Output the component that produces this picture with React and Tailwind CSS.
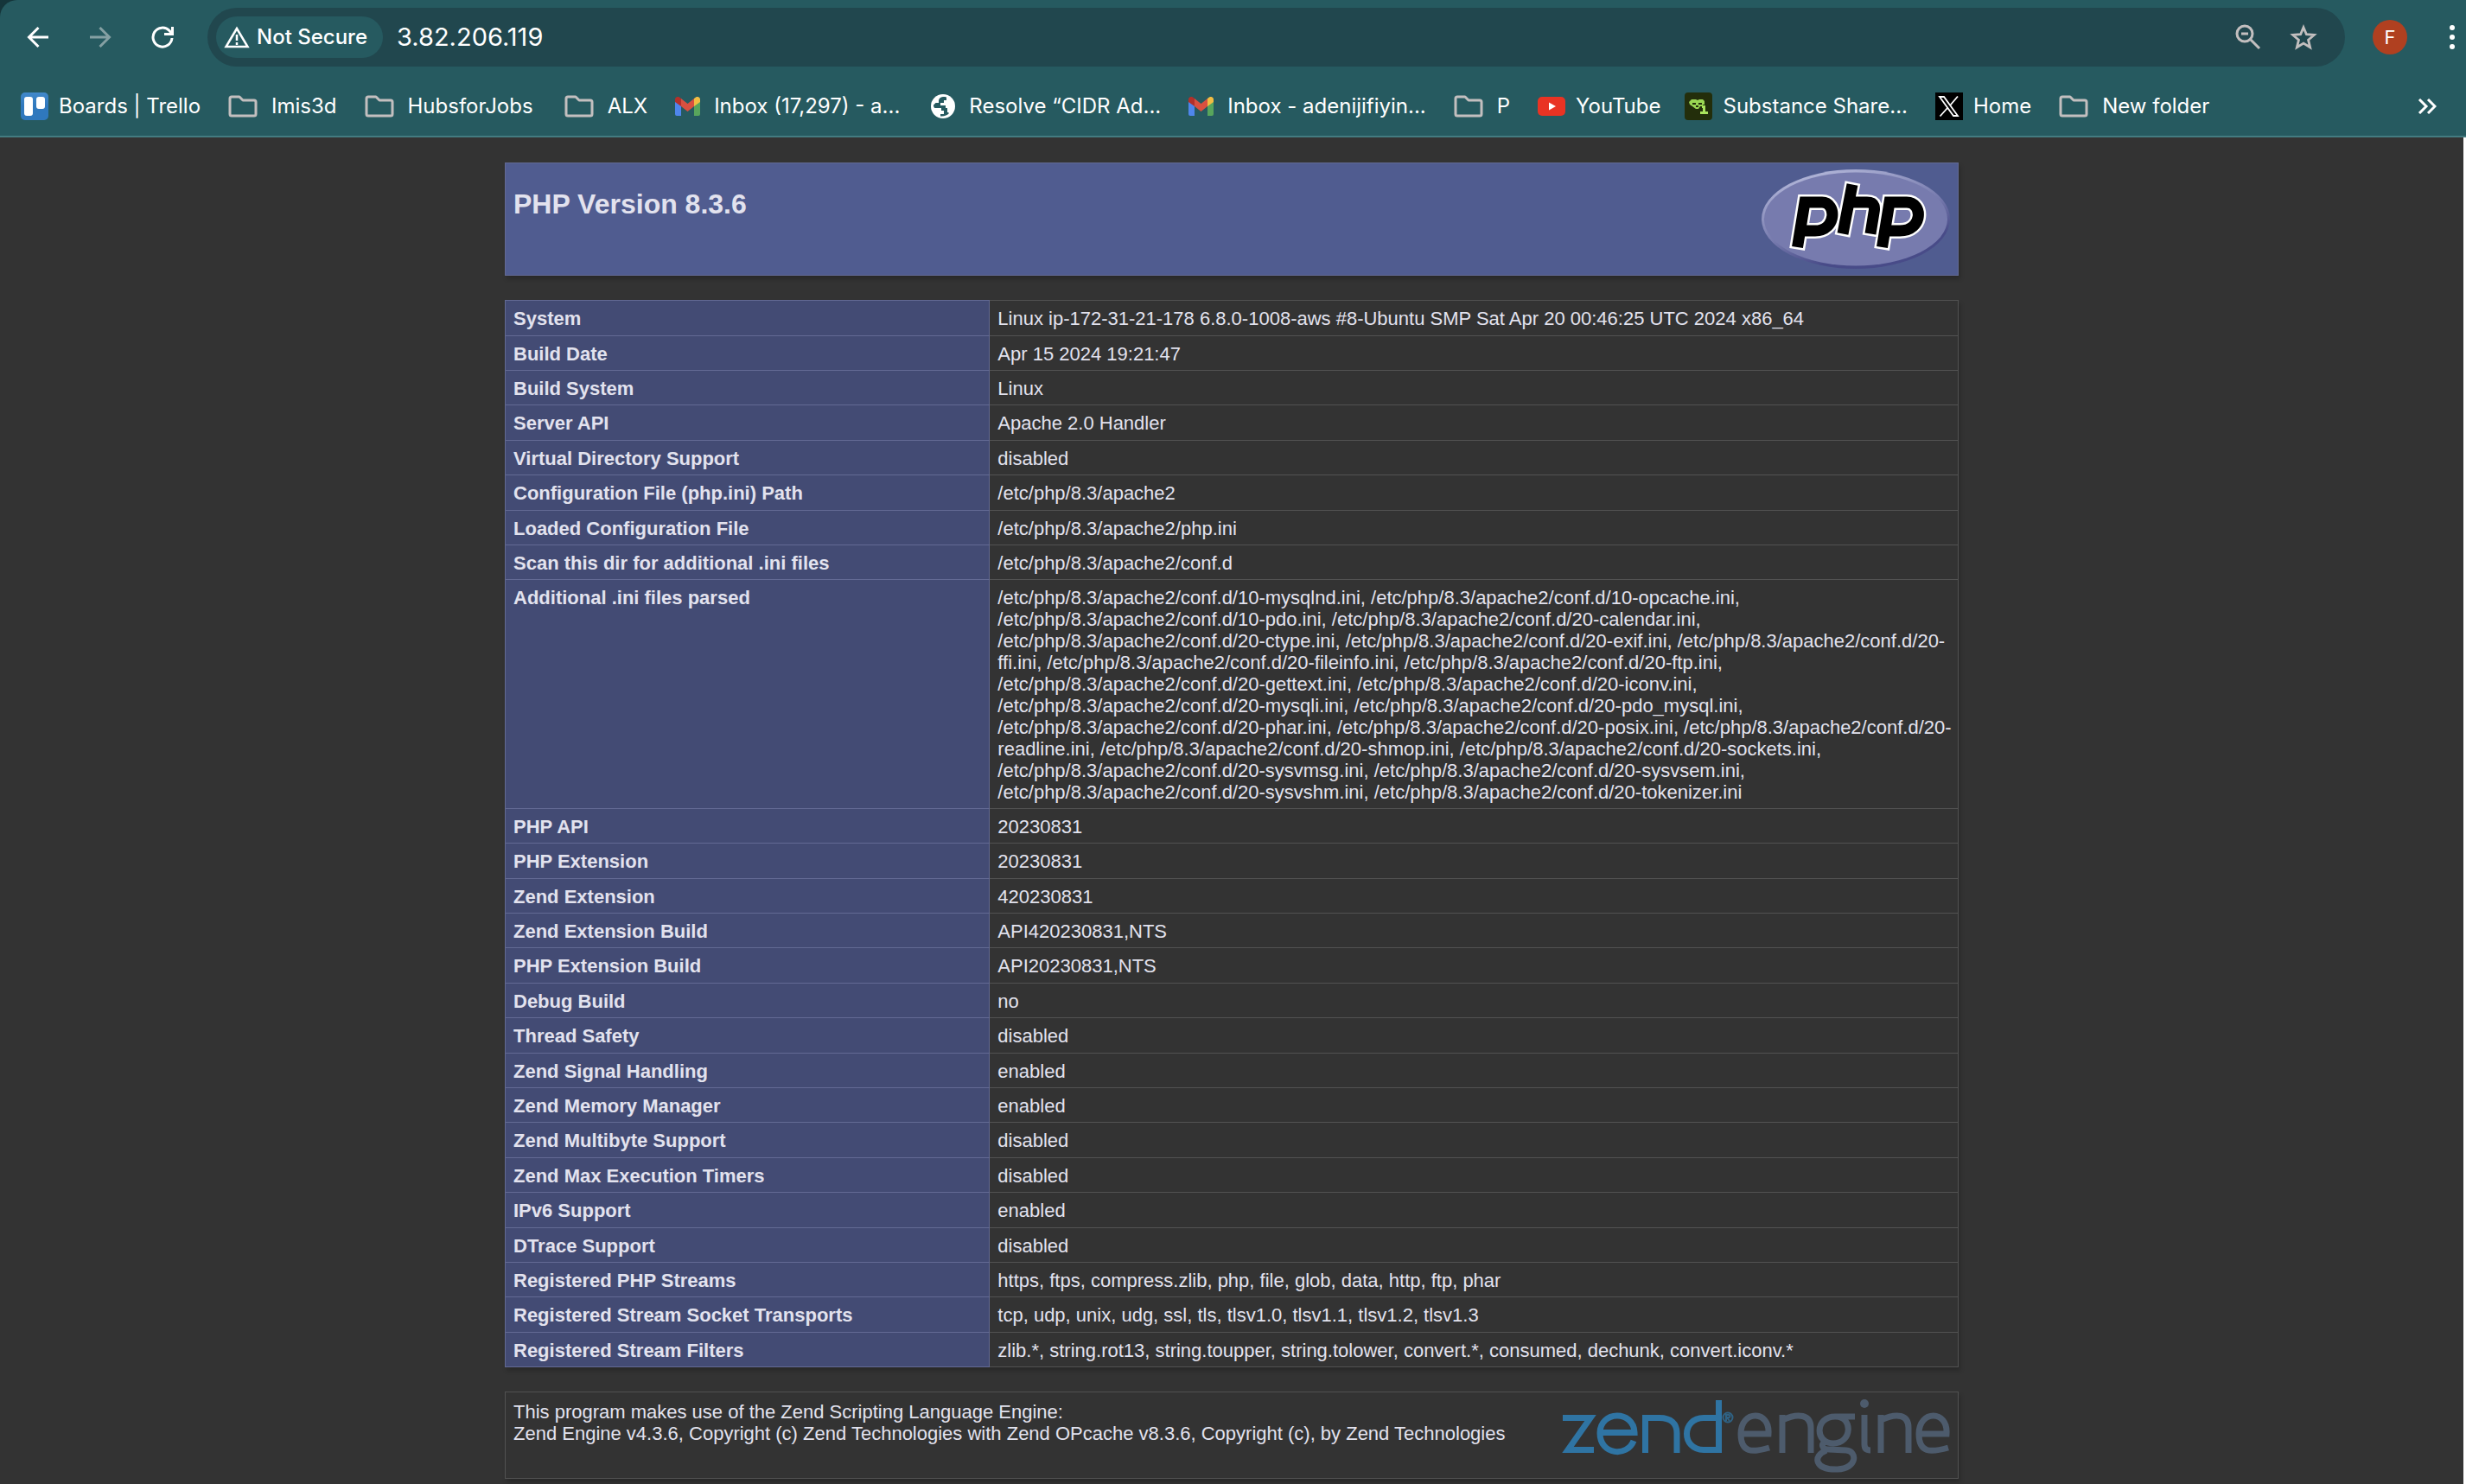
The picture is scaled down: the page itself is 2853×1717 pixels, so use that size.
const rows = [
  ["System", "Linux ip-172-31-21-178 6.8.0-1008-aws #8-Ubuntu SMP Sat Apr 20 00:46:25 UTC 2024 x86_64"],
  ["Build Date", "Apr 15 2024 19:21:47"],
  ["Build System", "Linux"],
  ["Server API", "Apache 2.0 Handler"],
  ["Virtual Directory Support", "disabled"],
  ["Configuration File (php.ini) Path", "/etc/php/8.3/apache2"],
  ["Loaded Configuration File", "/etc/php/8.3/apache2/php.ini"],
  ["Scan this dir for additional .ini files", "/etc/php/8.3/apache2/conf.d"],
  [
    "Additional .ini files parsed",
    "/etc/php/8.3/apache2/conf.d/10-mysqlnd.ini, /etc/php/8.3/apache2/conf.d/10-opcache.ini, /etc/php/8.3/apache2/conf.d/10-pdo.ini, /etc/php/8.3/apache2/conf.d/20-calendar.ini, /etc/php/8.3/apache2/conf.d/20-ctype.ini, /etc/php/8.3/apache2/conf.d/20-exif.ini, /etc/php/8.3/apache2/conf.d/20-ffi.ini, /etc/php/8.3/apache2/conf.d/20-fileinfo.ini, /etc/php/8.3/apache2/conf.d/20-ftp.ini, /etc/php/8.3/apache2/conf.d/20-gettext.ini, /etc/php/8.3/apache2/conf.d/20-iconv.ini, /etc/php/8.3/apache2/conf.d/20-mysqli.ini, /etc/php/8.3/apache2/conf.d/20-pdo_mysql.ini, /etc/php/8.3/apache2/conf.d/20-phar.ini, /etc/php/8.3/apache2/conf.d/20-posix.ini, /etc/php/8.3/apache2/conf.d/20-readline.ini, /etc/php/8.3/apache2/conf.d/20-shmop.ini, /etc/php/8.3/apache2/conf.d/20-sockets.ini, /etc/php/8.3/apache2/conf.d/20-sysvmsg.ini, /etc/php/8.3/apache2/conf.d/20-sysvsem.ini, /etc/php/8.3/apache2/conf.d/20-sysvshm.ini, /etc/php/8.3/apache2/conf.d/20-tokenizer.ini",
  ],
  ["PHP API", "20230831"],
  ["PHP Extension", "20230831"],
  ["Zend Extension", "420230831"],
  ["Zend Extension Build", "API420230831,NTS"],
  ["PHP Extension Build", "API20230831,NTS"],
  ["Debug Build", "no"],
  ["Thread Safety", "disabled"],
  ["Zend Signal Handling", "enabled"],
  ["Zend Memory Manager", "enabled"],
  ["Zend Multibyte Support", "disabled"],
  ["Zend Max Execution Timers", "disabled"],
  ["IPv6 Support", "enabled"],
  ["DTrace Support", "disabled"],
  ["Registered PHP Streams", "https, ftps, compress.zlib, php, file, glob, data, http, ftp, phar"],
  ["Registered Stream Socket Transports", "tcp, udp, unix, udg, ssl, tls, tlsv1.0, tlsv1.1, tlsv1.2, tlsv1.3"],
  ["Registered Stream Filters", "zlib.*, string.rot13, string.toupper, string.tolower, convert.*, consumed, dechunk, convert.iconv.*"],
];

const FolderIcon = () => (
  <svg viewBox="0 0 34 26" className="h-[26px] w-[34px]" fill="none" stroke="#c3bfbf" strokeWidth="3" strokeLinejoin="round">
    <path d="M2 4a2 2 0 0 1 2-2h9l4 4h13a2 2 0 0 1 2 2v14a2 2 0 0 1-2 2H4a2 2 0 0 1-2-2z" />
  </svg>
);

const TrelloIcon = () => (
  <svg viewBox="0 0 32 32" className="size-8">
    <defs>
      <linearGradient id="trello" x1="0" y1="0" x2="0" y2="1">
        <stop offset="0" stopColor="#4289cb" />
        <stop offset="0.500" stopColor="#2f78bd" />
      </linearGradient>
    </defs>
    <rect width="32" height="32" rx="5" fill="url(#trello)" />
    <rect x="4" y="5" width="10" height="22" rx="3" fill="#fff" />
    <rect x="18" y="5" width="10" height="14" rx="3" fill="#fff" />
  </svg>
);

const GmailIcon = () => (
  <svg viewBox="0 0 29 22" className="h-[22px] w-[29px]">
    <path d="M0 5h7v17H2a2 2 0 0 1-2-2z" fill="#4f86ec" />
    <path d="M22 5h7v15a2 2 0 0 1-2 2h-5z" fill="#58a55c" />
    <path d="M22 2l2-1.500c2-1.500 5 0 5 2.500v3l-7 5z" fill="#f2bd42" />
    <path d="M7 2L5 .5C3-1 0 .5 0 3v3l7 5z" fill="#b3302a" />
    <path d="M7 2l7.500 6L22 2v9l-7.500 6L7 11z" fill="#d95040" />
  </svg>
);

const GlobeIcon = () => (
  <svg viewBox="0 0 28 28" className="size-7">
    <circle cx="14" cy="14" r="14" fill="#fff" />
    <path d="M14 3c-3 .4-5 2-5 4.500V10H5.500L3 12.500c0 2 .5 3 1.500 3.500H12v3h3v4h-4v2.500c4 .5 8-1 10-3.500l-1-1h-1v-5h-2v-3h-6v-3h4V7h3V3.500C17 3 15.500 3 14 3z" fill="#265a60" />
  </svg>
);

const YouTubeIcon = () => (
  <svg viewBox="0 0 32 22" className="h-[22px] w-8">
    <rect width="32" height="22" rx="5" fill="#e93323" />
    <path d="M13 6.500v9l8-4.500z" fill="#fff" />
  </svg>
);

const SubstanceIcon = () => (
  <svg viewBox="0 0 32 32" className="size-8">
    <rect width="32" height="32" rx="4" fill="#232e0b" />
    <path d="M8 8h5l2 1 2-1h4l2 2v4h-2v2h-3l-2 3h-3l-4-3-3-2-1-3z" fill="#9ad653" />
    <path d="M9 12h4v2H9zM16 12h4v2h-4zM13 15h3v2h-3z" fill="#232e0b" />
    <path d="M20 15h4v7h3v3h-9v-3h3v-4h-1z" fill="#a9e35c" />
  </svg>
);

const XIcon = () => (
  <svg viewBox="0 0 32 32" className="size-8">
    <rect width="32" height="32" fill="#000" />
    <path d="M5 5h5l16 22h-5zM26 4.500L17.500 14.500M14 18L5.500 27.500" fill="none" stroke="#fff" strokeWidth="1.800" />
  </svg>
);

const bookmarks = [
  [TrelloIcon, "Boards | Trello", "ml-6 gap-3"],
  [FolderIcon, "Imis3d", "ml-8 gap-4"],
  [FolderIcon, "HubsforJobs", "ml-8 gap-4"],
  [FolderIcon, "ALX", "ml-9 gap-4"],
  [GmailIcon, "Inbox (17,297) - a...", "ml-8 gap-4"],
  [GlobeIcon, "Resolve “CIDR Ad...", "ml-9 gap-4"],
  [GmailIcon, "Inbox - adenijifiyin...", "ml-8 gap-4"],
  [FolderIcon, "P", "ml-8 gap-4"],
  [YouTubeIcon, "YouTube", "ml-8 gap-3"],
  [SubstanceIcon, "Substance Share...", "ml-7 gap-3"],
  [XIcon, "Home", "ml-8 gap-3"],
  [FolderIcon, "New folder", "ml-8 gap-4"],
];

const iconButton = "flex size-8 shrink-0 items-center justify-center";

function Toolbar() {
  return (
    <div className="flex h-[86px] items-center">
      <button aria-label="Back" className={iconButton + " ml-7"}>
        <svg viewBox="0 0 26 26" className="size-[26px]" fill="none" stroke="#fff" strokeWidth="3">
          <path d="M25 13H3M13.500 2L2.500 13l11 11" />
        </svg>
      </button>
      <button aria-label="Forward" className={iconButton + " ml-10"}>
        <svg viewBox="0 0 26 26" className="size-[26px]" fill="none" stroke="#85a0a3" strokeWidth="3">
          <path d="M1 13h22M12.500 2l11 11-11 11" />
        </svg>
      </button>
      <button aria-label="Reload" className={iconButton + " ml-10"}>
        <svg viewBox="0 0 26 26" className="size-[26px]" fill="none" stroke="#fff" strokeWidth="3">
          <path d="M24 14A11 11 0 1 1 21 5.500L23 8M24.500 1v8.500H15" />
        </svg>
      </button>
      <div className="ml-9 flex h-[68px] flex-1 items-center rounded-full bg-[#21474e] pr-8 pl-[10px]">
        <button className="flex h-12 shrink-0 items-center gap-2 rounded-full bg-[#265a60] pr-[18px] pl-[9px] text-[24px] font-medium">
          <svg viewBox="0 0 30 26" className="h-[26px] w-[30px]" fill="none" stroke="#fff" strokeWidth="2.500">
            <path d="M15 3L2.500 24h25zM15 10v7M15 19v3" />
          </svg>
          Not Secure
        </button>
        <input aria-label="Address" defaultValue="3.82.206.119" className="ml-4 min-w-0 flex-1 bg-transparent text-[29px] outline-none" />
        <button aria-label="Zoom" className={iconButton}>
          <svg viewBox="0 0 30 30" className="size-[30px]" fill="none" stroke="#c3bfbf" strokeWidth="3">
            <circle cx="11" cy="11" r="9" />
            <path d="M17.500 17.500L28 28M7 11h8" />
          </svg>
        </button>
        <button aria-label="Bookmark this page" className={iconButton + " ml-8"}>
          <svg viewBox="0 0 34 32" className="h-8 w-[34px]" fill="none" stroke="#c3bfbf" strokeWidth="3">
            <path d="M17 4l3.600 8.500 9.400.8-7.100 6.100 2.200 9.100-8.100-4.900-8.100 4.900 2.200-9.100L4 13.300l9.400-.8z" />
          </svg>
        </button>
      </div>
      <button aria-label="Profile" className="ml-8 flex size-10 items-center justify-center rounded-full bg-[#b04020] text-[22px]">
        F
      </button>
      <button aria-label="Menu" className={iconButton + " ml-9"}>
        <svg viewBox="0 0 8 28" className="h-7 w-2" fill="#fff">
          <circle cx="4" cy="3" r="3" />
          <circle cx="4" cy="14" r="3" />
          <circle cx="4" cy="25" r="3" />
        </svg>
      </button>
    </div>
  );
}

function Bookmarks() {
  return (
    <nav className="flex h-[73px] items-center border-b-2 border-[#437b80] pt-[3px] text-[24px]">
      {bookmarks.map(([Icon, label, spacing], i) => (
        <a key={i} href="#" className={"flex shrink-0 items-center " + spacing}>
          <Icon />
          {label}
        </a>
      ))}
      <button aria-label="More bookmarks" className="mr-[34px] ml-auto">
        <svg viewBox="0 0 22 18" className="h-[18px] w-[22px]" fill="none" stroke="#fff" strokeWidth="3">
          <path d="M2 1l8 8-8 8M12 1l8 8-8 8" />
        </svg>
      </button>
    </nav>
  );
}

const PhpLogo = () => (
  <svg viewBox="0 0 218 115" className="h-[115px] w-[218px] shrink-0" role="img" aria-label="PHP logo">
    <defs>
      <linearGradient id="rim" x1="0.250" y1="0" x2="0.750" y2="1">
        <stop offset="0" stopColor="#b4b8da" />
        <stop offset="0.500" stopColor="#777bae" />
        <stop offset="0.800" stopColor="#484b88" />
      </linearGradient>
    </defs>
    <ellipse cx="109" cy="57.500" rx="109" ry="57.500" fill="url(#rim)" />
    <ellipse cx="109" cy="57.500" rx="106" ry="54" fill="#777bae" />
    <g fill="none" strokeLinejoin="miter">
      <path
        stroke="#fff"
        strokeWidth="18"
        d="M41.100 92.500L50 38H70C87 38 87 71 62 71H45M93.500 77L105.500 15M102 38H122C132 38 131 45 130 50L125.500 77M139.100 92.500L148 38H168C187 38 187 71 160 71H143"
      />
      <path
        stroke="#000"
        strokeWidth="13"
        d="M41.500 90L50 38H70C87 38 87 71 62 71H47M94 74.500L105 17.500M102 38H122C132 38 131 45 130 50L126 74.500M139.500 90L148 38H168C187 38 187 71 160 71H145"
      />
    </g>
  </svg>
);

const ZendLogo = () => (
  <svg viewBox="0 0 450 85" className="h-[85px] w-[450px] shrink-0" role="img" aria-label="Zend Engine logo" fill="none">
    <g stroke="#2f74a3" strokeWidth="7">
      <path d="M2 21.500H34L8 58.500H38" />
      <path d="M44 38.500H85C84 12 45 13 45 39C45 65 77 67 84 48" />
      <path d="M97.500 62V21.500H114C127 21.500 134 28 134 39V62" />
      <path d="M182.500 1V58.500H165C139 58.500 139 21.500 165 21.500H182" />
    </g>
    <g stroke="#2f6284" strokeWidth="2">
      <circle cx="193" cy="21" r="5.500" />
      <path d="M191 25V18h3c2 0 2 3 0 3h-2l3 4" />
    </g>
    <g stroke="#4d5b6c" strokeWidth="7">
      <path d="M208 40H240C242 12 208 12 208 40C208 62 221 62 241 56" />
      <path d="M256 62V18M256 24C275 15 289 18 289 33V62" />
      <path d="M340 20H317C294 20 293 51 315 51C337 51 338 20 318 20M308 47C299 52 302 58 310 58L330 59C343 60 343 80 320 81C294 82 290 66 307 59" />
      <path d="M351 18V52Q351 59 358 59" />
      <path d="M370 62V18M370 24C389 15 402 18 402 33V62" />
      <path d="M414 40H446C448 12 414 12 414 40C414 62 427 62 448 56" />
    </g>
    <circle cx="351" cy="5" r="5" fill="#4d5b6c" />
  </svg>
);

const shadow = "shadow-[2px_4px_5px_rgba(0,0,0,0.2)]";

export default function App() {
  return (
    <div className="flex min-h-screen flex-col bg-[#333333]">
      <div className="bg-[#15353a]">
        <header className="rounded-tl-[20px] bg-[#265a60] font-['Inter',sans-serif] text-white">
          <Toolbar />
          <Bookmarks />
        </header>
      </div>
      <div className="flex flex-1 border-r-3 border-white">
        <main className="mx-auto flex w-full max-w-[1682px] flex-col gap-7 pt-[29px] font-['Liberation_Sans',Arial,sans-serif] text-[22px] leading-[25px] text-[#e2e2ee]">
          <div className={"flex items-start justify-between border border-[#636a94] bg-[#505c90] px-[9px] py-[7px] " + shadow}>
            <h1 className="pt-[22px] text-[32px] leading-9 font-bold">PHP Version 8.3.6</h1>
            <PhpLogo />
          </div>
          <table className={"w-full table-fixed border-collapse " + shadow}>
            <tbody>
              {rows.map(([name, value]) => (
                <tr key={name} className="h-10 nth-[5n+1]:h-[41px] nth-[5n+4]:h-[41px]">
                  <th scope="row" className="w-1/3 border border-[#636a94] bg-[#434b74] px-[9px] pt-2 pb-[6px] text-left align-top font-bold">
                    {name}
                  </th>
                  <td className="border border-[#525252] pt-2 pr-1 pb-[6px] pl-[9px] align-top">{value}</td>
                </tr>
              ))}
            </tbody>
          </table>
          <div className={"flex items-start justify-between border border-[#525252] px-[9px] pt-2 pb-[6px] " + shadow}>
            <p className="pt-[2px]">
              This program makes use of the Zend Scripting Language Engine:
              <br />
              Zend Engine v4.3.6, Copyright (c) Zend Technologies with Zend OPcache v8.3.6, Copyright (c), by Zend Technologies
            </p>
            <ZendLogo />
          </div>
        </main>
      </div>
    </div>
  );
}
